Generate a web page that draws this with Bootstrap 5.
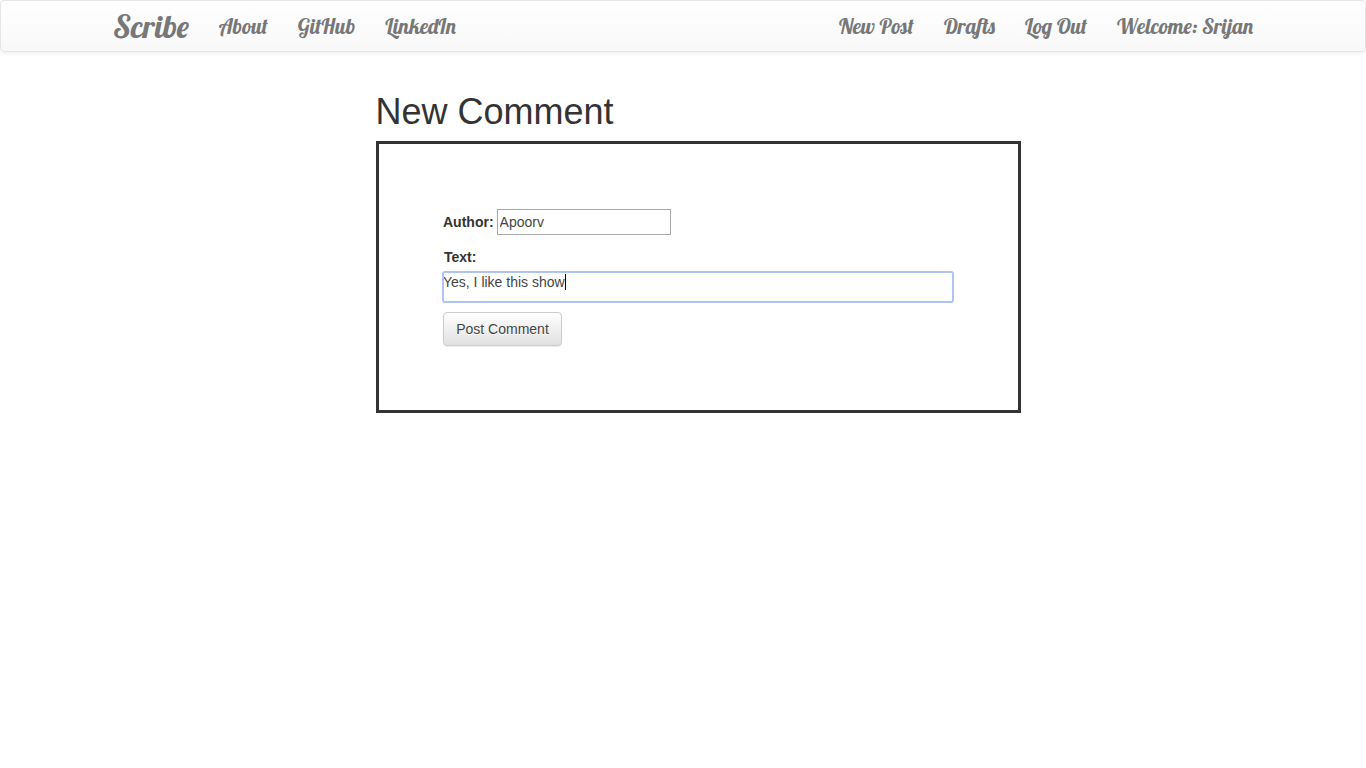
<!DOCTYPE html>
<html lang="en">
<head>
<meta charset="utf-8">
<meta name="viewport" content="width=device-width, initial-scale=1">
<title>Scribe - New Comment</title>
<link href="https://cdn.jsdelivr.net/npm/bootstrap@5.3.0/dist/css/bootstrap.min.css" rel="stylesheet">
<style>
body{font-family:"Liberation Sans",Arial,sans-serif;font-size:14px;line-height:20px;color:#333;background:#fff}
.site-nav{height:52px;border:1px solid #e5e5e5;border-radius:4px;background:linear-gradient(#fff,#f8f8f8);box-shadow:0 1px 5px rgba(0,0,0,.075)}
.site-wrap{width:1170px;max-width:none;padding:0 15px}
.site-nav .navbar-brand,.site-nav .nav-link{font-family:Lobster,"Liberation Serif",serif;font-weight:400;color:#777;white-space:nowrap;padding:0;margin:0}
.site-nav .navbar-brand{font-size:31.5px;line-height:50px}
.site-nav .nav-link{font-size:21px;line-height:50px}
.menu-left{gap:30px;margin-left:30px}
.menu-right{gap:30px}
.comment-page{width:645px;margin:40px 0 0 376px}
.comment-page h1{font-size:36px;line-height:39px;font-weight:400;margin:0 0 10px -.5px;color:#333}
.comment-box{height:272px;border:3px solid #333;padding:65px 64px 0}
.author-input{width:174px;height:26px;border:1px solid #a9a9a9;border-radius:0;padding:0 2px;font-size:14px;line-height:20px;color:#444;margin-left:3px}
.text-label{margin:12px 0 0 1px}
.text-area{width:512px;height:32px;margin:4px 0 0 -1px;border:2px solid #b0c4f0;border-radius:3px;line-height:18px;color:#444;overflow:hidden}
.text-area span:first-child{margin-left:-1px}
.caret{display:inline-block;width:1px;height:16px;background:#000;vertical-align:-3px}
.post-btn{width:119px;height:34px;margin-top:9px;padding:6px 0;font-size:14px;line-height:20px;color:#444;border:1px solid #ccc;border-radius:4px;background:linear-gradient(#fff,#e0e0e0);text-shadow:0 1px 0 #fff;box-shadow:inset 0 1px 0 rgba(255,255,255,.15),0 1px 1px rgba(0,0,0,.075)}
</style>
</head>
<body>
<nav class="site-nav">
  <div class="container site-wrap d-flex">
    <a class="navbar-brand" href="#">Scribe</a>
    <div class="d-flex menu-left">
      <a class="nav-link" href="#">About</a>
      <a class="nav-link" href="#">GitHub</a>
      <a class="nav-link" href="#">LinkedIn</a>
    </div>
    <div class="d-flex menu-right ms-auto">
      <a class="nav-link" href="#">New Post</a>
      <a class="nav-link" href="#">Drafts</a>
      <a class="nav-link" href="#">Log Out</a>
      <a class="nav-link" href="#">Welcome: Srijan</a>
    </div>
  </div>
</nav>
<main class="comment-page">
  <h1>New Comment</h1>
  <form class="comment-box">
    <div class="d-flex align-items-center">
      <label class="fw-bold" for="author">Author:</label>
      <input class="author-input" id="author" type="text" value="Apoorv">
    </div>
    <div class="fw-bold text-label">Text:</div>
    <div class="text-area" role="textbox"><span>Yes, I like this show</span><span class="caret"></span></div>
    <button class="btn post-btn d-block" type="button">Post Comment</button>
  </form>
</main>
<script src="https://cdn.jsdelivr.net/npm/bootstrap@5.3.0/dist/js/bootstrap.bundle.min.js"></script>
</body>
</html>
